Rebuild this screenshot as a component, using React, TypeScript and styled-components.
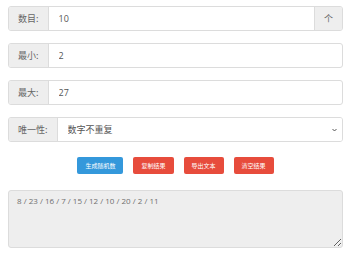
import React, { useState } from 'react'
import styled, { createGlobalStyle } from 'styled-components'

const GlobalStyle = createGlobalStyle`
  html, body {
    margin: 0;
    padding: 0;
    background: #ffffff;
  }
  body {
    font-family: "Open Sans", "Noto Sans CJK SC", sans-serif;
  }
`

const Page = styled.div`
  display: flex;
  flex-direction: column;
  padding: 6px 17px 0 8px;
`

const InputGroup = styled.div`
  display: flex;
  height: 25px;
  margin-bottom: 12px;
  border: 1px solid #dcdcdc;
  border-radius: 3px;
  box-sizing: border-box;
  overflow: hidden;
  background: #ffffff;
`

const Addon = styled.span<{ $side?: 'left' | 'right' }>`
  display: flex;
  align-items: center;
  padding: 0 9px;
  background: #eeeeee;
  color: #666666;
  font-size: 9px;
  font-family: "Noto Sans CJK SC", sans-serif;
  white-space: nowrap;
  border-${p => (p.$side === 'right' ? 'left' : 'right')}: 1px solid #dcdcdc;
`

const TextInput = styled.input`
  flex: 1;
  min-width: 0;
  border: none;
  outline: none;
  padding: 0 10px;
  font-size: 9px;
  font-family: "Open Sans", "Noto Sans CJK SC", sans-serif;
  color: #555555;
  background: transparent;
`

const SelectWrap = styled.div`
  position: relative;
  flex: 1;
  display: flex;
  min-width: 0;
`

const Select = styled.select`
  flex: 1;
  min-width: 0;
  appearance: none;
  border: none;
  outline: none;
  padding: 0 16px 0 10px;
  font-size: 9px;
  font-family: "Noto Sans CJK SC", sans-serif;
  color: #555555;
  background: #ffffff;
`

const Chevron = styled.svg`
  position: absolute;
  right: 5px;
  top: 50%;
  margin-top: -2px;
  width: 5px;
  height: 4px;
  pointer-events: none;
`

const ButtonRow = styled.div`
  display: flex;
  justify-content: center;
  gap: 10px;
  margin: 3px 0 16px;
`

const Button = styled.button<{ $tone: 'blue' | 'red' }>`
  height: 17px;
  padding: 0 8px;
  border: none;
  border-radius: 2px;
  background: ${p => (p.$tone === 'blue' ? '#3498db' : '#e74c3c')};
  color: #ffffff;
  font-size: 6px;
  font-family: "Noto Sans CJK SC", sans-serif;
  cursor: pointer;
`

const Output = styled.textarea`
  height: 58px;
  box-sizing: border-box;
  padding: 4px 8px;
  border: 1px solid #dcdcdc;
  border-radius: 3px;
  background: #eeeeee;
  color: #6f6f6f;
  font-size: 8px;
  font-family: "Open Sans", "Noto Sans CJK SC", sans-serif;
  outline: none;
  resize: vertical;
`

export default function App() {
  const [count, setCount] = useState('10')
  const [min, setMin] = useState('2')
  const [max, setMax] = useState('27')
  const [unique, setUnique] = useState('unique')
  const [result] = useState('8 / 23 / 16 / 7 / 15 / 12 / 10 / 20 / 2 / 11')

  return (
    <Page>
      <GlobalStyle />
      <InputGroup>
        <Addon>数目:</Addon>
        <TextInput value={count} onChange={e => setCount(e.target.value)} />
        <Addon $side="right">个</Addon>
      </InputGroup>
      <InputGroup>
        <Addon>最小:</Addon>
        <TextInput value={min} onChange={e => setMin(e.target.value)} />
      </InputGroup>
      <InputGroup>
        <Addon>最大:</Addon>
        <TextInput value={max} onChange={e => setMax(e.target.value)} />
      </InputGroup>
      <InputGroup>
        <Addon>唯一性:</Addon>
        <SelectWrap>
          <Select value={unique} onChange={e => setUnique(e.target.value)}>
            <option value="unique">数字不重复</option>
            <option value="repeat">数字可重复</option>
          </Select>
          <Chevron viewBox="0 0 5 4">
            <path d="M0.5 1 L2.5 3 L4.5 1" fill="none" stroke="#444" strokeWidth="0.9" />
          </Chevron>
        </SelectWrap>
      </InputGroup>
      <ButtonRow>
        <Button $tone="blue">生成随机数</Button>
        <Button $tone="red">复制结果</Button>
        <Button $tone="red">导出文本</Button>
        <Button $tone="red">清空结果</Button>
      </ButtonRow>
      <Output readOnly value={result} />
    </Page>
  )
}
